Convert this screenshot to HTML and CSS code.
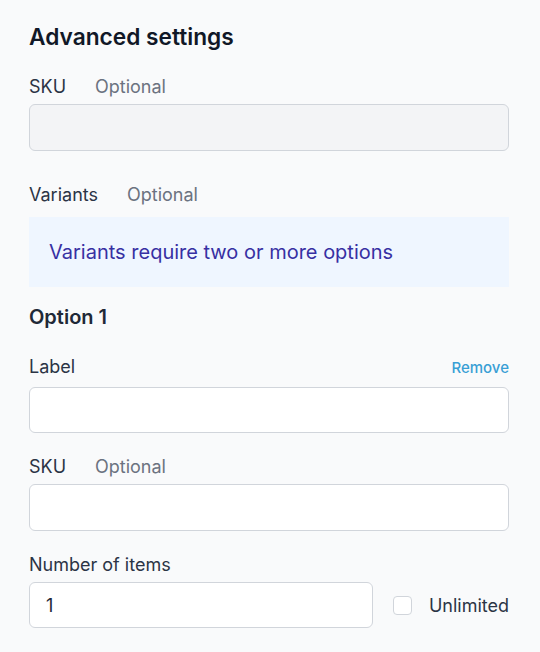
FILE: index.html
```html
<!DOCTYPE html>
<html lang="en">
<head>
<meta charset="utf-8">
<title>Advanced settings</title>
<link rel="stylesheet" href="styles.css">
</head>
<body>
<main class="panel">
  <h2 class="title">Advanced settings</h2>

  <div class="field field-first">
    <div class="label-row"><span class="label">SKU</span><span class="optional">Optional</span></div>
    <input class="input input-tall input-disabled" type="text" disabled>
  </div>

  <div class="field field-variants">
    <div class="label-row"><span class="label">Variants</span><span class="optional">Optional</span></div>
    <div class="info">Variants require two or more options</div>
  </div>

  <h3 class="option-title">Option 1</h3>

  <div class="field field-label">
    <div class="label-row label-row-split"><span class="label">Label</span><a class="remove" href="#">Remove</a></div>
    <input class="input" type="text">
  </div>

  <div class="field field-next">
    <div class="label-row"><span class="label">SKU</span><span class="optional">Optional</span></div>
    <input class="input input-tall" type="text">
  </div>

  <div class="field field-next">
    <div class="label-row"><span class="label">Number of items</span></div>
    <div class="count-row">
      <input class="input input-count" type="text" value="1">
      <label class="check"><span class="box"></span><span class="check-text">Unlimited</span></label>
    </div>
  </div>
</main>
</body>
</html>
```

FILE: styles.css
```css
* { box-sizing: border-box; }
html, body { margin: 0; padding: 0; }
body {
  background: #f9fafb;
  font-family: Inter, "Noto Sans", "Liberation Sans", sans-serif;
  color: #374151;
  width: 540px;
  height: 652px;
  overflow: hidden;
}
.panel {
  padding: 23px 31px 0 29px;
  width: 540px;
}
.title {
  margin: 0;
  font-size: 22.7px;
  line-height: 28px;
  font-weight: 600;
  color: #111827;
}
.field-first { margin-top: 24px; }
.field-variants { margin-top: 32px; }
.field-label { margin-top: 24px; }
.field-next { margin-top: 22px; }
.label-row {
  display: flex;
  align-items: baseline;
  gap: 29px;
  font-size: 18px;
  line-height: 24px;
  margin-bottom: 5px;
}
.label { color: #2b3445; }
.optional { color: #6b7280; }
.label-row-split { justify-content: space-between; margin-bottom: 7px; }
.remove {
  font-size: 15px;
  font-weight: 500;
  color: #3a9fd5;
  text-decoration: none;
}
.input {
  display: block;
  width: 100%;
  height: 46px;
  border: 1px solid #d1d5db;
  border-radius: 6px;
  background: #ffffff;
  padding: 0 16px;
  font-family: inherit;
  font-size: 18px;
  color: #1f2937;
  outline: none;
}
.input-tall { height: 47px; }
.input-disabled { background: #f3f4f6; }
.info {
  margin-top: 10px;
  background: #eff6ff;
  padding: 21px 20px;
  font-size: 20px;
  line-height: 28px;
  color: #3730a3;
}
.option-title {
  margin: 16px 0 0;
  font-size: 20px;
  line-height: 28px;
  font-weight: 600;
  color: #1f2937;
}
.count-row {
  display: flex;
  align-items: center;
}
.input-count { flex: 1; width: auto; }
.check {
  display: flex;
  align-items: center;
  margin-left: 20px;
  font-size: 18px;
  color: #2b3445;
}
.box {
  width: 19px;
  height: 19px;
  border: 1px solid #d1d5db;
  border-radius: 4px;
  background: #ffffff;
}
.check-text { margin-left: 17px; }
```
